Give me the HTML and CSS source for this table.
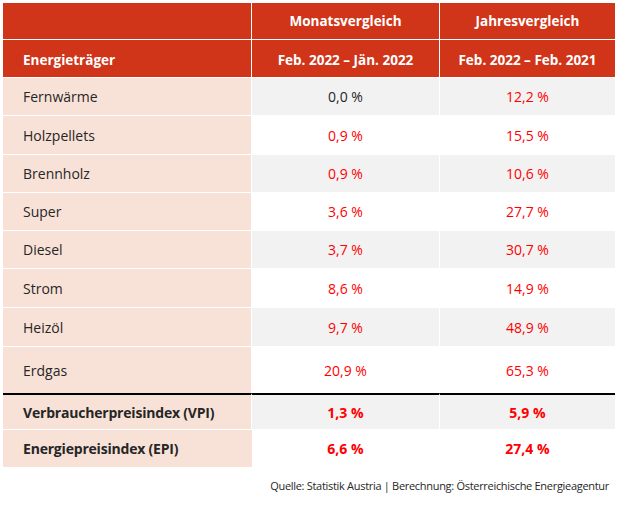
FILE: index.html
```html
<!DOCTYPE html>
<html lang="de">
<head>
<meta charset="utf-8">
<title>Energiepreise</title>
<link rel="stylesheet" href="styles.css">
</head>
<body>
<div class="wrap">
<table class="tbl">
  <colgroup>
    <col class="c1"><col class="c2"><col class="c3">
  </colgroup>
  <thead>
    <tr class="h1"><th class="lab"></th><th>Monatsvergleich</th><th>Jahresvergleich</th></tr>
    <tr class="h2"><th class="lab">Energieträger</th><th>Feb. 2022 – Jän. 2022</th><th>Feb. 2022 – Feb. 2021</th></tr>
  </thead>
  <tbody>
    <tr class="r g r38"><td class="lab">Fernwärme</td><td class="dark">0,0 %</td><td>12,2 %</td></tr>
    <tr class="r r39"><td class="lab">Holzpellets</td><td>0,9 %</td><td>15,5 %</td></tr>
    <tr class="r g r38"><td class="lab">Brennholz</td><td>0,9 %</td><td>10,6 %</td></tr>
    <tr class="r r38"><td class="lab">Super</td><td>3,6 %</td><td>27,7 %</td></tr>
    <tr class="r g r38"><td class="lab">Diesel</td><td>3,7 %</td><td>30,7 %</td></tr>
    <tr class="r r39"><td class="lab">Strom</td><td>8,6 %</td><td>14,9 %</td></tr>
    <tr class="r g r39"><td class="lab">Heizöl</td><td>9,7 %</td><td>48,9 %</td></tr>
    <tr class="r last r46"><td class="lab">Erdgas</td><td>20,9 %</td><td>65,3 %</td></tr>
    <tr class="r g sum top"><td class="lab">Verbraucherpreisindex (VPI)</td><td>1,3 %</td><td>5,9 %</td></tr>
    <tr class="r sum r37"><td class="lab">Energiepreisindex (EPI)</td><td>6,6 %</td><td>27,4 %</td></tr>
  </tbody>
</table>
<p class="src">Quelle: Statistik Austria | Berechnung: Österreichische Energieagentur</p>
</div>
</body>
</html>
```

FILE: styles.css
```css
html, body {
  margin: 0;
  padding: 0;
  background: #ffffff;
}
body {
  padding: 3px 0 0 3px;
  font-family: "Open Sans", "Noto Sans", sans-serif;
}
.wrap {
  width: 612px;
}
.tbl {
  width: 612px;
  border-collapse: separate;
  border-spacing: 0;
  table-layout: fixed;
  font-size: 14px;
}
.c1 { width: 249px; }
.c2 { width: 188px; }
.c3 { width: 175px; }

.tbl th, .tbl td {
  padding: 0;
  border-right: 1px solid #ffffff;
  border-bottom: 1px solid #ffffff;
  text-align: center;
  vertical-align: middle;
}
.tbl th:last-child, .tbl td:last-child {
  border-right: 0;
}
.tbl th {
  background: #d0351a;
  color: #ffffff;
  font-weight: 700;
  font-size: 13.5px;
}
.tbl thead .h2 th {
  padding-top: 2px;
}
.tbl th.lab {
  text-align: left;
  padding-left: 20px;
}
.h1 { height: 37px; }
.h2 { height: 38px; }

.tbl td {
  color: #ff0000;
  background: #ffffff;
}
.tbl .g td {
  background: #f2f2f2;
}
.tbl td.lab {
  background: #f8e2d8;
  color: #262626;
  text-align: left;
  padding-left: 20px;
}
.tbl td.dark {
  color: #262626;
}
.r38 { height: 38px; }
.r39 { height: 39px; }
.r46 { height: 46px; }
.r37 { height: 37px; }
.tbl .last td {
  border-bottom: 0;
}
.tbl .top td {
  border-top: 2px solid #000000;
  height: 34px;
}
.tbl .sum td {
  font-weight: 700;
}
.tbl .sum td.lab {
  letter-spacing: -0.2px;
}
.tbl tr.sum:last-child td.lab {
  border-right: 0;
}
.tbl tr.sum:last-child td {
  border-bottom: 0;
}
.src {
  margin: 11px 6px 0 0;
  text-align: right;
  font-size: 11px;
  letter-spacing: -0.3px;
  color: #262626;
}
```
